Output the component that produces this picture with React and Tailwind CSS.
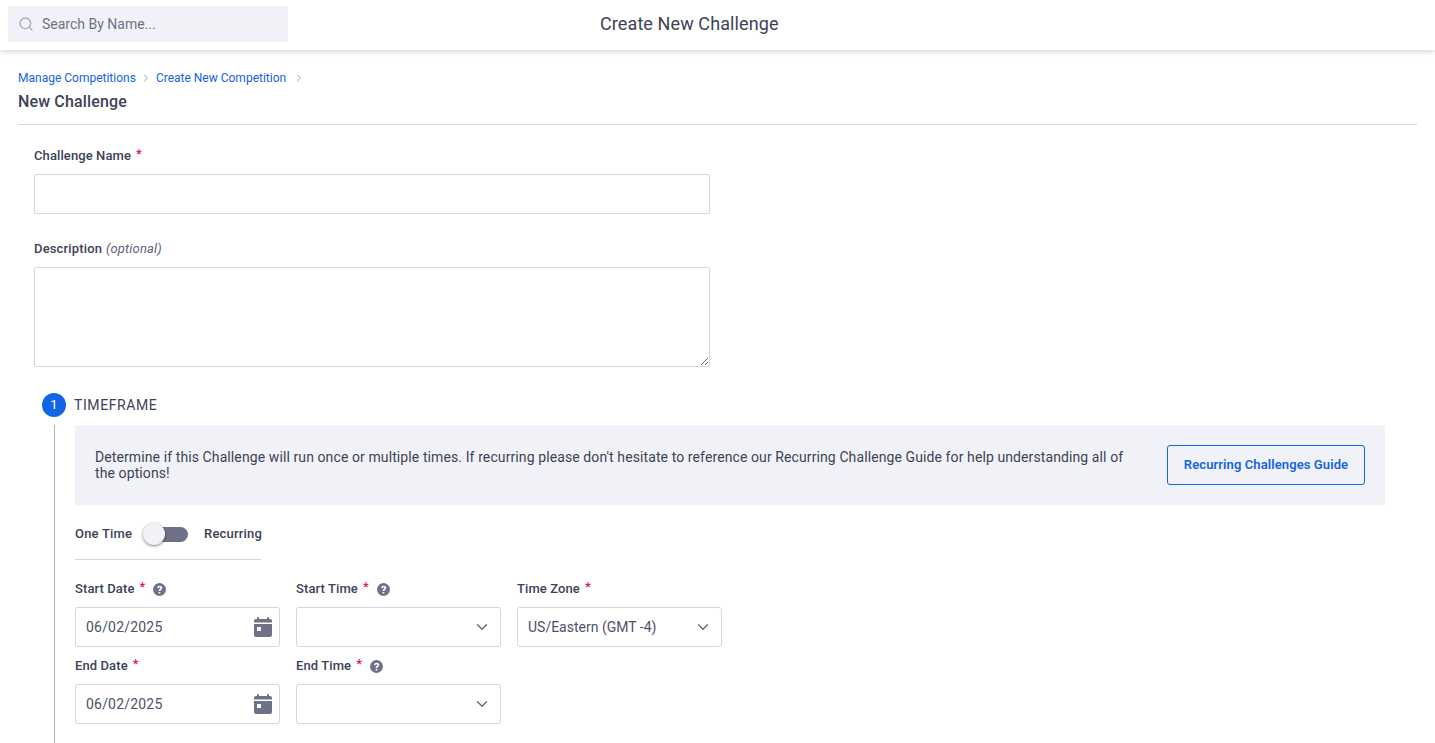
import React from 'react';
import { Search, ChevronRight, ChevronDown } from 'lucide-react';

function Star() {
  return <span className="text-[#e0115f] text-[13px] ml-[5px] relative -top-[2px]">*</span>;
}

function Help() {
  return (
    <svg viewBox="0 0 24 24" className="w-[13px] h-[13px] ml-[8px]" fill="#6d7287">
      <path d="M12 0a12 12 0 1 0 0 24 12 12 0 0 0 0-24zm1.6 19.4h-3.2v-3h3.2v3zm2.7-8.2c-.5.7-1.200 1.200-1.800 1.600-.7.500-1 .9-1 1.800h-3c0-1.800.7-2.700 1.800-3.500.8-.6 1.500-1 1.500-1.900 0-.8-.7-1.300-1.600-1.300-1 0-1.700.6-2 1.600L7.500 8.500C8.100 6.300 9.800 5 12.300 5c2.700 0 4.700 1.500 4.700 3.800 0 1-.2 1.700-.7 2.400z" />
    </svg>
  );
}

function Calendar() {
  return (
    <svg viewBox="0 0 18 20" className="w-[18px] h-[20px]" fill="#6d7287">
      <rect x="3" y="0" width="2" height="4" rx="1" />
      <rect x="13" y="0" width="2" height="4" rx="1" />
      <path d="M2 2h14a2 2 0 0 1 2 2v1.500H0V4a2 2 0 0 1 2-2z" />
      <path fillRule="evenodd" d="M0 7h18v11a2 2 0 0 1-2 2H2a2 2 0 0 1-2-2V7zm3 3v4h4v-4H3z" />
    </svg>
  );
}

function Label({ children, star = true, help }) {
  return (
    <div className="flex items-center h-[20px] text-[13px] font-medium tracking-[0.1px] text-[#3d4257]">
      {children}
      {star && <Star />}
      {help && <Help />}
    </div>
  );
}

function DateBox({ value }) {
  return (
    <div className="w-[205px] h-[40px] border border-[#d4d6e4] rounded-[3px] flex items-center justify-between pl-[10px] pr-[7px] text-[14px] tracking-[0.2px] text-[#4d5268]">
      {value}
      <Calendar />
    </div>
  );
}

function SelectBox({ value }) {
  return (
    <div className="w-[205px] h-[40px] border border-[#d4d6e4] rounded-[3px] flex items-center pl-[10px] pr-[9px] text-[14px] text-[#4d5268]">
      {value}
      <ChevronDown size={18} strokeWidth={1.6} className="ml-auto text-[#5d6278]" />
    </div>
  );
}

export default function App() {
  return (
    <div className="h-screen overflow-hidden bg-white font-['Roboto',sans-serif] text-[#3d4257]">
      <header className="relative h-[50px] shadow-[0_1px_6px_rgba(40,45,70,0.25)] flex items-start pt-[6px] pl-2">
        <div className="w-[280px] h-[36px] rounded-[3px] bg-[#f1f2f7] flex items-center pl-[10px] gap-[8px] text-[14px] text-[#6d7287]">
          <Search size={16} strokeWidth={2} className="text-[#a9acba]" />
          Search By Name...
        </div>
        <h1 className="absolute left-[600px] top-[12px] text-[18px] leading-[24px] tracking-[0.1px] text-[#3d4257]">Create New Challenge</h1>
      </header>

      <main className="px-[18px]">
        <nav className="flex items-center h-[16px] mt-[20px] text-[12px] text-[#1464e6]">
          <span>Manage Competitions</span>
          <ChevronRight size={12} strokeWidth={1.5} className="text-[#7a8096] mx-[4px]" />
          <span>Create New Competition</span>
          <ChevronRight size={12} strokeWidth={1.5} className="text-[#7a8096] mx-[7px]" />
        </nav>
        <h2 className="mt-[5px] text-[16px] leading-[22px] font-medium tracking-[0.15px] text-[#3d4257]">New Challenge</h2>
        <div className="mt-[11px] border-t border-[#d4d6e4]" />

        <form className="pl-4 pt-[21px]">
          <Label>Challenge Name</Label>
          <input className="block mt-2 w-[676px] h-[40px] border border-[#d4d6e4] rounded-[2px] outline-none" />

          <div className="flex items-center h-[20px] mt-[25px] text-[13px] tracking-[0.15px]">
            <span className="font-medium">Description</span>
            <em className="ml-[4px] text-[#5d6278]">(optional)</em>
          </div>
          <textarea className="block mt-2 w-[676px] h-[100px] border border-[#d4d6e4] rounded-[2px] outline-none" />

          <div className="flex items-center ml-2 mt-[26px] h-[24px]">
            <div className="w-[24px] h-[24px] rounded-full bg-[#1464e6] text-white text-[13px] flex items-center justify-center">1</div>
            <span className="ml-2 text-[14px] tracking-[0.6px]">TIMEFRAME</span>
          </div>

          <div className="ml-[20px] mt-2 border-l border-[#b4b4bc] pl-5 h-[330px]">
            <div className="w-[1310px] h-[80px] bg-[#f1f2f7] flex items-center justify-between pl-5 pr-5">
              <p className="w-[1040px] text-[14px] leading-[16px] tracking-[0.1px]">
                Determine if this Challenge will run once or multiple times. If recurring please don't hesitate to reference our Recurring Challenge Guide for help understanding all of the options!
              </p>
              <button type="button" className="w-[198px] h-[40px] border border-[#1464e6] rounded-[3px] text-[#1464e6] text-[13px] font-semibold tracking-[0.1px]">
                Recurring Challenges Guide
              </button>
            </div>

            <div className="w-[186px] flex items-center h-[55px] pt-[4px] border-b border-[#d4d6e4] text-[13px] font-medium tracking-[0.2px] whitespace-nowrap">
              <span className="w-[57px] shrink-0">One Time</span>
              <div className="relative shrink-0 ml-[12px] w-[44px] h-[15px] rounded-full bg-[#6d7287]">
                <div className="absolute -left-[1px] -top-[4px] w-[22px] h-[22px] rounded-full bg-[#f1f2f7] shadow-[0_1px_3px_rgba(0,0,0,0.5)]" />
              </div>
              <span className="ml-[16px] shrink-0">Recurring</span>
            </div>

            <div className="grid grid-cols-[205px_205px_205px] gap-x-4 mt-[19px]">
              <div>
                <Label help>Start Date</Label>
                <div className="mt-2"><DateBox value="06/02/2025" /></div>
              </div>
              <div>
                <Label help>Start Time</Label>
                <div className="mt-2"><SelectBox value="" /></div>
              </div>
              <div>
                <Label>Time Zone</Label>
                <div className="mt-2"><SelectBox value="US/Eastern (GMT -4)" /></div>
              </div>
              <div className="mt-[9px]">
                <Label>End Date</Label>
                <div className="mt-2"><DateBox value="06/02/2025" /></div>
              </div>
              <div className="mt-[9px]">
                <Label help>End Time</Label>
                <div className="mt-2"><SelectBox value="" /></div>
              </div>
            </div>
          </div>
        </form>
      </main>
    </div>
  );
}
